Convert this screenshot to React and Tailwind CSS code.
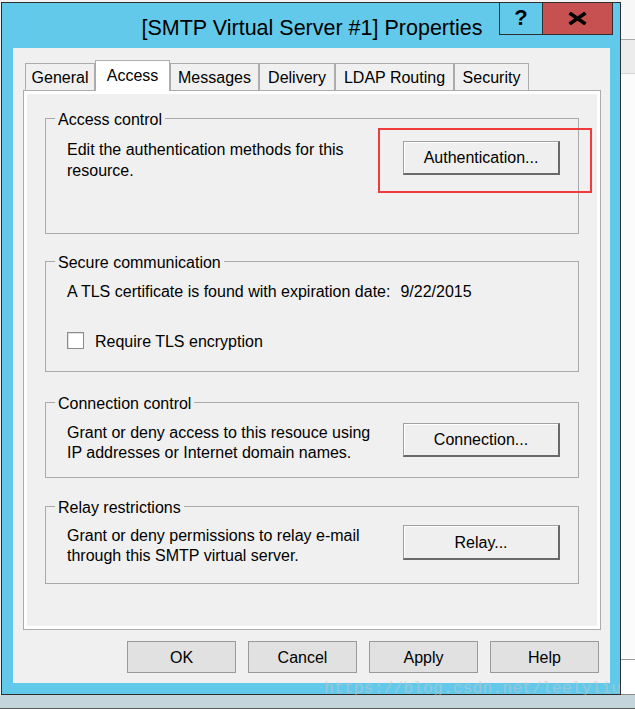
const tabs = [
  { label: "General", w: "w-[70px]" },
  { label: "Access", w: "w-[75px]", active: true },
  { label: "Messages", w: "w-[89px]" },
  { label: "Delivery", w: "w-[76px]" },
  { label: "LDAP Routing", w: "w-[119px]" },
  { label: "Security", w: "w-[75px]" },
]

const PageButton = ({ children, className = "" }) => (
  <button
    className={
      "w-[157px] shrink-0 border border-[#a0a0a0] border-r-2 border-b-2 border-r-[#696969] border-b-[#696969] bg-[#efefef] shadow-[inset_1px_1px_0_#fff] text-[16px] text-black pt-px " +
      className
    }
  >
    {children}
  </button>
)

const DialogButton = ({ children }) => (
  <button className="w-[109px] h-[32px] border border-[#9a9a9a] bg-[#e1e1e1] text-[16px] text-black pt-px">
    {children}
  </button>
)

const Group = ({ title, className = "", children }) => (
  <fieldset className={"ml-[21px] w-[534px] border border-[#a9a9a9] " + className}>
    <legend className="ml-[9px] px-[3px] leading-[21px]">
      <span className="relative top-px">{title}</span>
    </legend>
    {children}
  </fieldset>
)

export default function App() {
  return (
    <div className="relative w-[635px] h-[709px] overflow-hidden bg-[#f3f3f3] font-['Liberation_Sans',Arial,sans-serif] text-[16px] text-black">
      <div className="flex h-[695px] pt-[2px]">
        <div className="w-px shrink-0" />

        {/* window frame */}
        <div className="flex flex-col w-[620px] h-[693px] shrink-0 border border-[#2e2e2e] bg-[#63c9ea]">
          <div className="flex h-[45px] shrink-0">
            <div className="flex-1 pl-[123px] pt-[12px] text-center text-[21.5px] leading-[26px] whitespace-nowrap">
              [SMTP Virtual Server #1] Properties
            </div>
            <div className="flex -mt-px mr-[7px] h-[33px] border border-[#2e2e2e]">
              <div className="w-[43px] border-r border-[#2e2e2e] flex items-center justify-center text-[22px] font-bold leading-none pb-[2px]">
                ?
              </div>
              <div className="w-[69px] bg-[#c75050] flex items-center justify-center">
                <svg width="19" height="13" viewBox="0 0 19 13">
                  <path d="M1.5 1 L17.5 12 M17.5 1 L1.5 12" stroke="#000" strokeWidth="3.6" strokeLinecap="butt" />
                </svg>
              </div>
            </div>
          </div>

          {/* client area */}
          <div className="ml-[11px] w-[597px] h-[635px] bg-[#f0f0f0] pt-[12px] pl-[10px]">
            <div className="flex items-end h-[30px] pl-[2px]">
              {tabs.map((t) =>
                t.active ? (
                  <div
                    key={t.label}
                    className={`${t.w} relative z-10 -mb-px h-[31px] flex items-center justify-center pb-[1px] bg-white border-t border-l border-r border-[#acacac]`}
                  >
                    {t.label}
                  </div>
                ) : (
                  <div
                    key={t.label}
                    className={`${t.w} h-[27px] flex items-center justify-center pt-[2px] bg-[#f0f0f0] border-t border-l border-r border-[#acacac]`}
                  >
                    {t.label}
                  </div>
                )
              )}
            </div>

            <div className="w-[578px] h-[540px] border border-[#acacac] bg-[#f0f0f0] shadow-[inset_0_0_0_3px_#fff] pt-[17px]">
              <Group title="Access control" className="h-[126px]">
                <div className="flex pl-[21px] pr-[18px] pt-[8px]">
                  <div className="mt-[2px] leading-[21px]">
                    Edit the authentication methods for this
                    <br />
                    resource.
                  </div>
                  <PageButton className="ml-auto mt-[4px] h-[34px]">Authentication...</PageButton>
                </div>
              </Group>

              <Group title="Secure communication" className="mt-[17px] h-[121px]">
                <div className="pl-[21px] pt-[9px]">
                  <div className="flex leading-[21px]">
                    <span>A TLS certificate is found with expiration date:</span>
                    <span className="ml-[10px]">9/22/2015</span>
                  </div>
                  <div className="flex items-center gap-[11px] h-[21px] mt-[28px]">
                    <div className="w-[17px] h-[17px] border border-[#8a8a8a] bg-white shadow-[inset_1px_1px_0_#e2e2e2]" />
                    <span className="pt-[2px]">Require TLS encryption</span>
                  </div>
                </div>
              </Group>

              <Group title="Connection control" className="mt-[20px] h-[86px]">
                <div className="flex pl-[21px] pr-[18px] pt-[8px]">
                  <div className="mt-[2px] leading-[20px]">
                    Grant or deny access to this resouce using
                    <br />
                    IP addresses or Internet domain names.
                  </div>
                  <PageButton className="ml-auto mt-[2px] h-[34px]">Connection...</PageButton>
                </div>
              </Group>

              <Group title="Relay restrictions" className="mt-[18px] h-[88px]">
                <div className="flex pl-[21px] pr-[18px] pt-[7px]">
                  <div className="mt-[2px] leading-[20px]">
                    Grant or deny permissions to relay e-mail
                    <br />
                    through this SMTP virtual server.
                  </div>
                  <PageButton className="ml-auto mt-[1px] h-[35px]">Relay...</PageButton>
                </div>
              </Group>
            </div>

            <div className="flex justify-end gap-[12px] pr-[11px] mt-[11px]">
              <DialogButton>OK</DialogButton>
              <DialogButton>Cancel</DialogButton>
              <DialogButton>Apply</DialogButton>
              <DialogButton>Help</DialogButton>
            </div>
          </div>
        </div>

        {/* desktop strip on the right */}
        <div className="flex-1 -mt-[2px] flex flex-col bg-white">
          <div className="h-[39px] bg-[#f7f7f7]" />
          <div className="h-px bg-[#a8a8a8]" />
          <div className="h-[33px] bg-[#ececec]" />
          <div className="h-px bg-[#d6d6d6]" />
          <div className="h-[585px] bg-[#fbfbfb]" />
          <div className="h-px bg-[#9c9c9c]" />
          <div className="flex-1 bg-white border-b border-[#8c8c8c]" />
        </div>
      </div>

      <div className="h-[14px] bg-[#c4d5dc] border-b border-[#5a5a5a]" />

      {/* annotation box */}
      <div className="absolute left-[378px] top-[128px] w-[214px] h-[65px] border-2 border-[#ef3b3b]" />

      {/* watermark */}
      <div className="absolute left-[324px] top-[679px] font-['Liberation_Mono',monospace] text-[16.5px] leading-[20px] text-[#c8c8c8]/50 whitespace-nowrap">
        https://blog.csdn.net/leelyliu
      </div>
    </div>
  )
}
